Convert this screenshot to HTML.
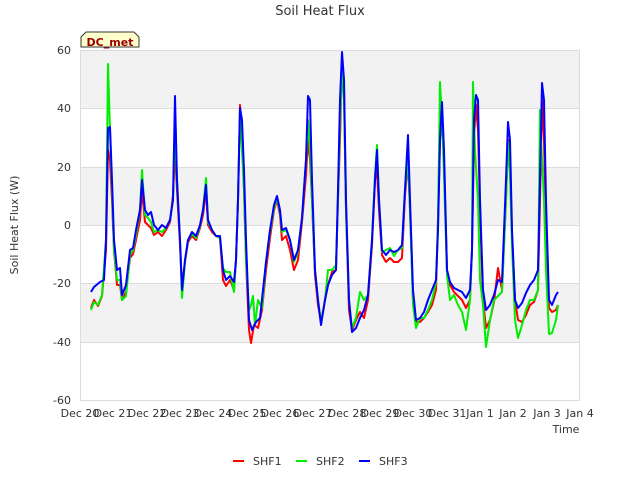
<!DOCTYPE html>
<html><head><meta charset="utf-8"><style>
body{margin:0;background:#fff;}
svg text{font-family:"DejaVu Sans","Liberation Sans",sans-serif;fill:#333;}
</style></head><body>
<svg width="640" height="480" xmlns="http://www.w3.org/2000/svg">
<rect x="80" y="50" width="500" height="58" fill="#f2f2f2"/>
<rect x="80" y="167" width="500" height="58" fill="#f2f2f2"/>
<rect x="80" y="283" width="500" height="59" fill="#f2f2f2"/>
<g stroke="#dcdcdc" stroke-width="1">
<line x1="80" y1="50.5" x2="580" y2="50.5"/><line x1="80" y1="108.5" x2="580" y2="108.5"/>
<line x1="80" y1="167.5" x2="580" y2="167.5"/><line x1="80" y1="225.5" x2="580" y2="225.5"/>
<line x1="80" y1="283.5" x2="580" y2="283.5"/><line x1="80" y1="342.5" x2="580" y2="342.5"/>
<line x1="80" y1="400.5" x2="580" y2="400.5"/>
<line x1="80.5" y1="50" x2="80.5" y2="400"/><line x1="579.5" y1="50" x2="579.5" y2="400"/>
</g>
<g font-size="11" text-anchor="end">
<text x="71" y="54">60</text><text x="71" y="112">40</text><text x="71" y="171">20</text>
<text x="71" y="229">0</text><text x="71" y="287">-20</text><text x="71" y="346">-40</text><text x="71" y="404">-60</text>
</g>
<g font-size="11" text-anchor="middle">
<text x="80" y="417">Dec 20</text><text x="113" y="417">Dec 21</text><text x="147" y="417">Dec 22</text>
<text x="180" y="417">Dec 23</text><text x="213" y="417">Dec 24</text><text x="247" y="417">Dec 25</text>
<text x="280" y="417">Dec 26</text><text x="313" y="417">Dec 27</text><text x="347" y="417">Dec 28</text>
<text x="380" y="417">Dec 29</text><text x="413" y="417">Dec 30</text><text x="447" y="417">Dec 31</text>
<text x="480" y="417">Jan 1</text><text x="513" y="417">Jan 2</text><text x="547" y="417">Jan 3</text>
<text x="580" y="417">Jan 4</text>
</g>
<text x="566" y="433" font-size="11" text-anchor="middle">Time</text>
<text x="320" y="15" font-size="13" text-anchor="middle">Soil Heat Flux</text>
<text transform="translate(18,225) rotate(-90)" font-size="11" text-anchor="middle">Soil Heat Flux (W)</text>
<g fill="none" stroke-width="2" stroke-linejoin="round">
<polyline stroke="#ff0000" points="91,308 94,300 98,306 102,296 106,250 108,150 110,160 112,200 114,250 117,285 120,285 122,300 126,292 130,258 133,254 136,240 140,220 142,190 145,222 148,225 151,228 154,235 158,232 162,236 166,230 170,222 173,195 175,150 177,190 180,245 182,288 185,262 188,242 192,236 196,240 200,228 203,215 206,190 208,225 212,232 216,236 220,238 223,280 226,286 230,280 234,290 236,260 238,200 240,105 242,140 244,190 246,260 249,330 251,343 254,325 258,328 262,310 266,270 270,238 274,210 277,200 280,215 282,240 286,236 290,250 294,270 298,260 302,222 306,175 308,140 310,160 312,200 315,275 318,305 321,322 325,300 328,285 332,272 336,270 338,200 340,140 342,60 344,90 346,210 349,310 352,330 356,320 360,312 364,318 368,300 372,245 375,180 377,170 379,210 382,255 386,262 390,258 394,262 398,262 402,258 405,195 408,160 410,210 413,300 416,322 420,322 424,318 428,312 432,305 436,290 438,220 440,140 442,110 444,165 447,270 450,285 454,292 458,296 462,300 466,308 470,300 472,250 474,140 476,105 478,130 480,210 483,300 486,328 490,320 494,302 498,268 502,290 506,200 508,140 510,165 512,235 515,300 518,320 522,322 526,315 530,305 534,302 538,290 540,200 542,100 544,140 546,230 549,308 552,312 556,310 558,305"/>
<polyline stroke="#00ee00" points="91,310 94,302 98,305 102,295 106,240 108,64 110,130 112,190 114,250 117,280 120,280 122,300 126,296 130,255 133,250 136,235 140,210 142,170 145,215 148,218 151,222 154,232 158,230 162,232 166,228 170,220 173,200 175,130 177,180 180,240 182,298 185,262 188,240 192,234 196,238 200,226 203,210 206,178 208,222 212,230 216,236 220,238 223,268 226,272 230,272 234,292 236,260 238,200 240,110 242,150 244,190 246,260 249,310 251,305 253,296 255,325 258,300 262,308 266,262 270,232 274,208 277,198 280,212 282,232 286,230 290,240 294,262 298,252 302,218 306,160 308,120 310,150 312,200 315,270 318,300 321,322 325,300 328,270 332,270 336,265 338,200 340,120 342,70 344,100 346,210 349,300 352,328 356,318 360,292 364,300 368,295 372,240 375,175 377,145 379,200 382,252 386,250 390,248 394,256 398,250 402,248 405,190 408,160 410,210 413,305 416,328 420,318 424,318 428,310 432,300 436,282 438,220 440,82 442,120 444,175 447,275 450,300 454,295 458,305 462,312 466,330 470,300 472,250 473,82 475,150 478,200 480,280 483,305 486,347 490,320 494,300 498,296 502,292 506,200 508,142 510,175 512,245 515,320 518,338 522,325 526,310 530,300 534,300 538,290 540,110 542,160 544,200 546,270 549,334 552,333 556,320 558,305"/>
<polyline stroke="#0000ff" points="91,292 94,287 100,282 104,280 106,240 108,128 110,127 112,180 114,240 117,270 120,268 122,295 126,285 130,250 133,248 136,230 140,210 142,180 145,210 148,215 151,212 154,225 158,230 162,225 166,228 170,220 173,200 175,96 177,180 180,240 182,290 185,260 188,240 192,232 196,236 200,225 203,210 206,185 208,220 212,230 216,236 220,236 223,270 226,280 230,276 234,282 236,260 238,200 240,108 242,120 244,170 246,240 249,320 252,330 256,322 260,318 263,290 266,262 270,230 274,205 277,196 280,210 282,230 286,228 290,240 294,260 298,250 302,218 306,160 308,96 310,100 312,180 315,270 318,300 321,325 325,300 328,285 332,275 336,270 338,190 340,100 342,52 344,80 346,200 349,300 352,332 356,328 360,318 364,310 368,295 372,240 375,180 377,150 379,200 382,250 386,255 390,250 394,252 398,250 402,245 405,190 408,135 410,200 413,290 416,320 420,318 424,312 428,300 432,290 436,280 438,230 440,140 442,102 444,150 447,270 450,282 454,288 458,290 462,292 466,298 470,290 472,250 474,120 476,95 478,100 480,200 483,290 486,310 490,305 494,295 498,280 502,282 506,180 508,122 510,140 512,230 515,300 518,308 522,303 526,293 530,285 534,280 538,270 540,180 542,83 544,100 546,200 549,300 552,305 556,295 558,292"/>
</g>
<path d="M81,47 L81,37 L86,32 L134,32 L139,37 L139,47 Z" fill="#ffffcc" stroke="#333" stroke-width="1"/>
<text x="110" y="46" font-size="11" font-weight="bold" text-anchor="middle" style="fill:#990000">DC_met</text>
<g font-size="11">
<line x1="233" y1="461" x2="244" y2="461" stroke="#ff0000" stroke-width="2"/><text x="253" y="465">SHF1</text>
<line x1="296" y1="461" x2="307" y2="461" stroke="#00ee00" stroke-width="2"/><text x="316" y="465">SHF2</text>
<line x1="359" y1="461" x2="370" y2="461" stroke="#0000ff" stroke-width="2"/><text x="379" y="465">SHF3</text>
</g>
</svg>
</body></html>
